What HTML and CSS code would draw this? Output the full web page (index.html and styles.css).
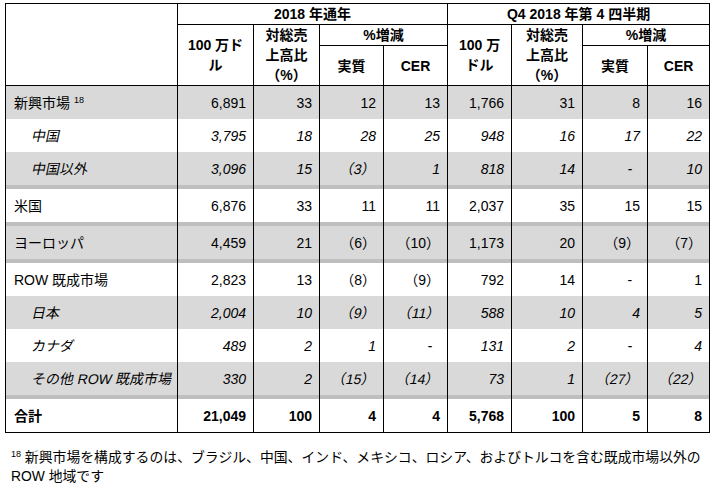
FILE: index.html
```html
<!DOCTYPE html>
<html lang="ja">
<head>
<meta charset="utf-8">
<link rel="stylesheet" href="styles.css">
</head>
<body>
<table class="fin">
  <colgroup>
    <col class="w-label"><col class="w-a"><col class="w-b"><col class="w-c"><col class="w-c">
    <col class="w-c"><col class="w-d"><col class="w-e"><col class="w-f">
  </colgroup>
  <thead>
    <tr class="h1">
      <th rowspan="3" class="corner"></th>
      <th colspan="4">2018 年通年</th>
      <th colspan="4">Q4 2018 年第 4 四半期</th>
    </tr>
    <tr class="h2">
      <th rowspan="2">100 万ド<br>ル</th>
      <th rowspan="2">対総売<br>上高比<br>（%）</th>
      <th colspan="2">%増減</th>
      <th rowspan="2">100 万<br>ドル</th>
      <th rowspan="2">対総売<br>上高比<br>（%）</th>
      <th colspan="2">%増減</th>
    </tr>
    <tr class="h3">
      <th>実質</th><th>CER</th><th>実質</th><th>CER</th>
    </tr>
  </thead>
  <tbody>
    <tr class="gray"><td class="lbl">新興市場 <sup>18</sup></td><td>6,891</td><td>33</td><td>12</td><td>13</td><td>1,766</td><td>31</td><td>8</td><td>16</td></tr>
    <tr class="sub"><td class="lbl"><span class="ob">中国</span></td><td>3,795</td><td>18</td><td>28</td><td>25</td><td>948</td><td>16</td><td>17</td><td>22</td></tr>
    <tr class="gray sub"><td class="lbl"><span class="ob">中国以外</span></td><td>3,096</td><td>15</td><td><span class="ob">（3）</span></td><td>1</td><td>818</td><td>14</td><td><span class="dash">-</span></td><td>10</td></tr>
    <tr class="sep"><td></td><td></td><td></td><td></td><td></td><td></td><td></td><td></td><td></td></tr>
    <tr><td class="lbl">米国</td><td>6,876</td><td>33</td><td>11</td><td>11</td><td>2,037</td><td>35</td><td>15</td><td>15</td></tr>
    <tr class="sep"><td></td><td></td><td></td><td></td><td></td><td></td><td></td><td></td><td></td></tr>
    <tr class="gray"><td class="lbl">ヨーロッパ</td><td>4,459</td><td>21</td><td>（6）</td><td>（10）</td><td>1,173</td><td>20</td><td>（9）</td><td>（7）</td></tr>
    <tr class="sep"><td></td><td></td><td></td><td></td><td></td><td></td><td></td><td></td><td></td></tr>
    <tr><td class="lbl">ROW 既成市場</td><td>2,823</td><td>13</td><td>（8）</td><td>（9）</td><td>792</td><td>14</td><td><span class="dash">-</span></td><td>1</td></tr>
    <tr class="gray sub"><td class="lbl"><span class="ob">日本</span></td><td>2,004</td><td>10</td><td><span class="ob">（9）</span></td><td><span class="ob">（11）</span></td><td>588</td><td>10</td><td>4</td><td>5</td></tr>
    <tr class="sub"><td class="lbl"><span class="ob">カナダ</span></td><td>489</td><td>2</td><td>1</td><td><span class="dash">-</span></td><td>131</td><td>2</td><td><span class="dash">-</span></td><td>4</td></tr>
    <tr class="gray sub"><td class="lbl"><span class="ob">その他 ROW 既成市場</span></td><td>330</td><td>2</td><td><span class="ob">（15）</span></td><td><span class="ob">（14）</span></td><td>73</td><td>1</td><td><span class="ob">（27）</span></td><td><span class="ob">（22）</span></td></tr>
    <tr class="sep"><td></td><td></td><td></td><td></td><td></td><td></td><td></td><td></td><td></td></tr>
    <tr class="total"><td class="lbl">合計</td><td>21,049</td><td>100</td><td>4</td><td>4</td><td>5,768</td><td>100</td><td>5</td><td>8</td></tr>
  </tbody>
</table>
<p class="note"><sup>18</sup> 新興市場を構成するのは、ブラジル、中国、インド、メキシコ、ロシア、およびトルコを含む既成市場以外の<br>ROW 地域です</p>
</body>
</html>
```

FILE: styles.css
```css
html, body {
  margin: 0;
  background: #ffffff;
}
body {
  padding: 3px 5px 0 5px;
  font-family: "Liberation Sans", "Noto Sans CJK JP", sans-serif;
  font-size: 14px;
  color: #000000;
}
.fin {
  border-collapse: collapse;
  table-layout: fixed;
  width: 704px;
  border: 1px solid #000;
}
.w-label { width: 172px; }
.w-a { width: 76px; }
.w-b { width: 66px; }
.w-c { width: 64px; }
.w-d { width: 71px; }
.w-e { width: 65px; }
.w-f { width: 62px; }

.fin th, .fin td {
  border: 1px solid #000;
  padding: 0;
}
.fin th {
  font-weight: bold;
  text-align: center;
  vertical-align: middle;
  line-height: 20px;
}
.h1 { height: 20px; }
.h2 { height: 21px; }
.h3 { height: 40px; }

.fin tbody td {
  border-top: none;
  border-bottom: none;
  height: 33px;
  text-align: right;
  padding-right: 7px;
  vertical-align: middle;
  line-height: 16px;
}
.fin tbody td.lbl {
  text-align: left;
  padding-left: 8px;
  padding-right: 0;
}
.fin tbody tr.sub td { font-style: italic; }
.fin tbody tr.sub td.lbl { padding-left: 26px; }
.fin tbody tr.gray td { background: #d9d9d9; }
.fin tbody tr.sep td {
  height: 4px;
  line-height: 0;
  background: #bfbfbf;
  padding: 0;
}
.fin tbody tr.total td { font-weight: bold; }
.fin tbody tr:last-child td { border-bottom: 1px solid #000; }

.ob {
  display: inline-block;
  font-style: normal;
  transform: skewX(-12deg);
}

.dash { margin-right: 8px; }

sup {
  font-size: 9px;
  line-height: 0;
  vertical-align: 5px;
}
.note {
  margin: 15px 0 0 6px;
  font-size: 13.85px;
  line-height: 19px;
}
```
